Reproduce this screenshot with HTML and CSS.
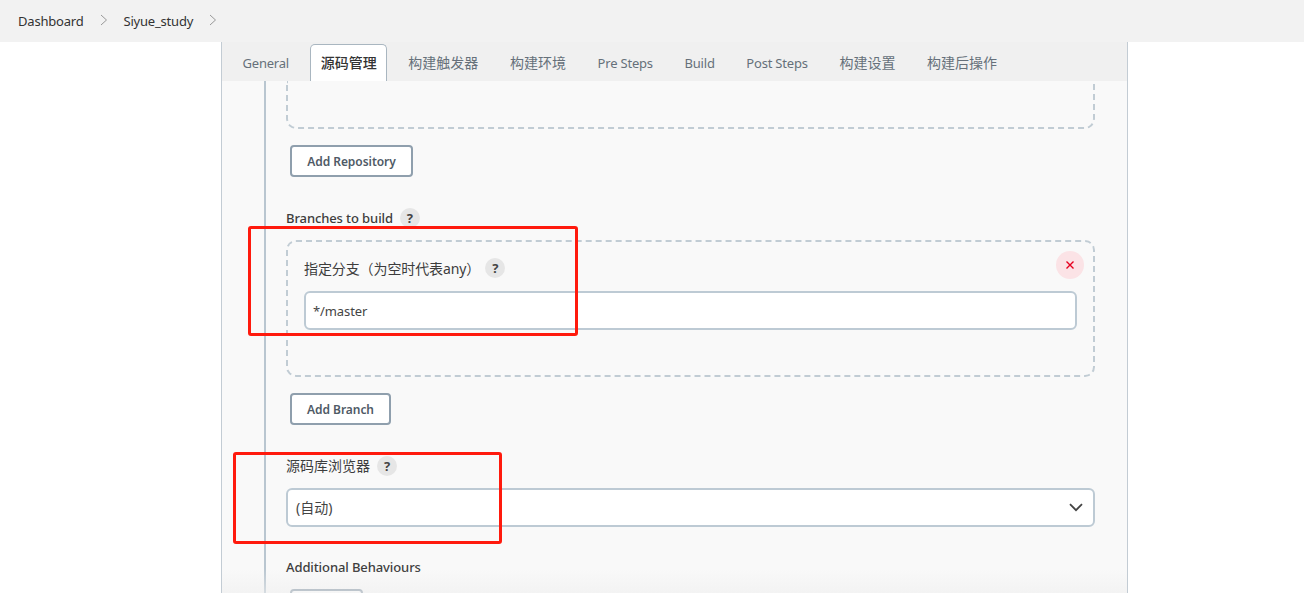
FILE: index.html
```html
<!DOCTYPE html>
<html lang="zh">
<head>
<meta charset="utf-8">
<title>Siyue_study</title>
<link rel="stylesheet" href="styles.css">
</head>
<body>
<nav class="topbar">
  <span class="crumb">Dashboard</span>
  <svg class="chev" viewBox="0 0 8 12" width="8" height="12"><path d="M1 1l5.5 5L1 11" fill="none" stroke="#999" stroke-width="1"/></svg>
  <span class="crumb">Siyue_study</span>
  <svg class="chev" viewBox="0 0 8 12" width="8" height="12"><path d="M1 1l5.5 5L1 11" fill="none" stroke="#999" stroke-width="1"/></svg>
</nav>
<main class="panel">
  <div class="tabs">
    <span class="tab">General</span>
    <span class="tab active cjk">源码管理</span>
    <span class="tab cjk">构建触发器</span>
    <span class="tab cjk">构建环境</span>
    <span class="tab">Pre Steps</span>
    <span class="tab">Build</span>
    <span class="tab">Post Steps</span>
    <span class="tab cjk">构建设置</span>
    <span class="tab cjk">构建后操作</span>
  </div>
  <div class="content">
    <div class="rail">
      <div class="dashed dashed-top"></div>
      <button class="btn btn-repo">Add Repository</button>
      <div class="label label-branches">Branches to build <span class="help">?</span></div>
      <div class="dashed dashed-branch">
        <span class="close"><svg viewBox="0 0 10 10" width="10" height="10"><path d="M1.5 1.5l7 7M8.5 1.5l-7 7" stroke="#e6001f" stroke-width="1.4" fill="none"/></svg></span>
        <div class="label label-spec cjk"><span>指定分支（为空时代表any）</span> <span class="help">?</span></div>
        <div class="field">*/master</div>
      </div>
      <button class="btn btn-branch">Add Branch</button>
      <div class="label label-browser cjk"><span class="label-text">源码库浏览器</span> <span class="help">?</span></div>
      <div class="field select cjk"><span class="label-text">(自动)</span>
        <svg viewBox="0 0 14 9" width="14" height="9"><path d="M1 1.2l6 6 6-6" fill="none" stroke="#444" stroke-width="1.8"/></svg>
      </div>
      <div class="label label-behave">Additional Behaviours</div>
      <button class="btn btn-add" aria-label="Add"></button>
    </div>
  </div>
  <div class="fade"></div>
</main>
<div class="mark mark-a"></div>
<div class="mark mark-b"></div>
</body>
</html>
```
FILE: styles.css
```css
* { box-sizing: border-box; }
html, body { height: 593px; overflow: hidden; }
body {
  margin: 0;
  position: relative;
  background: #fff;
  color: #333;
  font-family: "Noto Sans", "Noto Sans CJK SC", sans-serif;
  font-size: 13px;
}
.topbar {
  height: 42px;
  background: #f2f2f2;
  display: flex;
  align-items: center;
  padding-left: 18px;
  color: #333;
}
.crumb { font-size: 13px; letter-spacing: -0.2px; }
.chev { margin: 0 16px; position: relative; top: -1px; }
.panel {
  position: relative;
  width: 907px;
  height: 551px;
  margin-left: 221px;
  background: #f9f9f9;
  border-left: 1px solid #c3ccd4;
  border-right: 1px solid #c3ccd4;
  overflow: hidden;
}
.tabs {
  height: 39px;
  background: #f0f0f0;
  display: flex;
  align-items: flex-end;
  padding-left: 10px;
  gap: 1.15px;
}
.tab {
  height: 37px;
  display: flex;
  align-items: center;
  padding: 0 10.5px;
  margin-right: 9.5px;
  color: #66707a;
  font-size: 13px;
  letter-spacing: -0.2px;
}
.tab.cjk { font-size: 14px; letter-spacing: 0; padding-bottom: 2px; }
.tab.active {
  background: #fff;
  border: 1px solid #a9b6c0;
  border-bottom: 0;
  border-radius: 5px 5px 0 0;
  color: #333;
  font-weight: 500;
  padding: 0 9.5px 2px;
  width: 77px;
  justify-content: center;
}
.content { padding-left: 42px; }
.rail {
  border-left: 2px solid #b9c6d0;
  height: 512px;
  padding-left: 20px;
  padding-right: 32px;
}
.dashed {
  border: 2px dashed #c1ccd4;
  border-radius: 10px;
  position: relative;
}
.dashed-top {
  height: 48px;
  border-top: 0;
  border-radius: 0 0 10px 10px;
}
.btn {
  display: block;
  margin-left: 4px;
  background: #fff;
  border: 2px solid #8f9fad;
  border-radius: 4px;
  color: #4f5a66;
  font-family: inherit;
  font-size: 12px;
  font-weight: 600;
  letter-spacing: -0.05px;
  padding: 0;
}
.btn-repo { width: 123px; height: 32px; margin-top: 16px; }
.btn-branch { width: 101px; height: 32px; margin-top: 16px; }
.btn-add { width: 73px; height: 32px; margin-top: 12px; }
.label {
  display: flex;
  align-items: center;
  gap: 7px;
  height: 20px;
  font-size: 13px;
  font-weight: 500;
  letter-spacing: -0.1px;
  color: #3d3d3d;
}
.label.cjk { font-size: 14px; font-weight: 400; letter-spacing: 0; }
.label-text { position: relative; top: -1px; }
.label-branches { margin-top: 31px; }
.label.label-spec { margin-top: 16px; padding-left: 16px; gap: 5px; letter-spacing: -0.1px; }
.label-browser { margin-top: 31px; }
.label-behave { margin-top: 30px; }
.help {
  width: 20px;
  height: 20px;
  border-radius: 50%;
  background: #e6e6e6;
  color: #444;
  font-size: 13px;
  font-weight: 700;
  display: flex;
  align-items: center;
  justify-content: center;
  letter-spacing: 0;
}
.dashed-branch { height: 137px; margin-top: 12px; }
.close {
  position: absolute;
  right: 9px;
  top: 9px;
  width: 28px;
  height: 28px;
  border-radius: 50%;
  background: #fbe3e6;
  display: flex;
  align-items: center;
  justify-content: center;
}
.field {
  background: #fff;
  border: 2px solid #bdcad4;
  border-radius: 6px;
  height: 39px;
  margin: 13px 16px 0;
  padding-left: 7px;
  display: flex;
  align-items: center;
  font-size: 13px;
  letter-spacing: -0.1px;
  color: #444;
}
.select {
  margin: 12px 0 0;
  justify-content: space-between;
  padding-left: 8px;
  padding-right: 10px;
  font-size: 14px;
  letter-spacing: 0;
}
.fade {
  position: absolute;
  left: 0;
  right: 0;
  bottom: 0;
  height: 24px;
  background: linear-gradient(to bottom, rgba(238,238,238,0), rgba(238,238,238,0.55));
  pointer-events: none;
}
.mark {
  position: absolute;
  border: 3px solid #ff1a0d;
  border-radius: 3px;
}
.mark-a { left: 248px; top: 226px; width: 330px; height: 110px; }
.mark-b { left: 233px; top: 452px; width: 269px; height: 92px; }
```
